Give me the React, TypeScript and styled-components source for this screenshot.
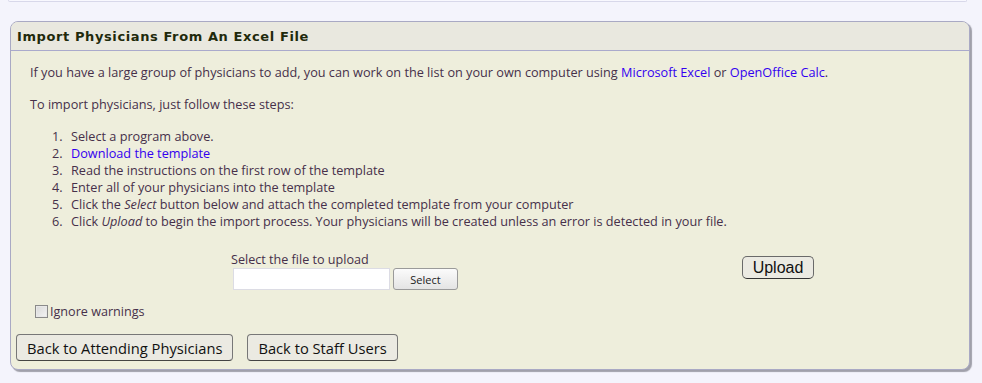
import styled, { createGlobalStyle } from "styled-components";

const GlobalStyle = createGlobalStyle`
  html, body {
    margin: 0;
    padding: 0;
    background: #f4f4fc;
  }
  body {
    font-family: "Open Sans", "Noto Sans", sans-serif;
  }
`;

function App() {
  const steps: React.ReactNode[] = [
    "Select a program above.",
    <Link key="dl">Download the template</Link>,
    "Read the instructions on the first row of the template",
    "Enter all of your physicians into the template",
    <>
      Click the <em>Select</em> button below and attach the completed template from your computer
    </>,
    <>
      Click <em>Upload</em> to begin the import process. Your physicians will be created unless an error is
      detected in your file.
    </>,
  ];

  return (
    <Page>
      <GlobalStyle />
      <PrevPanel />
      <Panel>
        <Header>
          <Title>Import Physicians From An Excel File</Title>
        </Header>
        <Body>
          <Text>
            If you have a large group of physicians to add, you can work on the list on your own computer using{" "}
            <Link>Microsoft Excel</Link> or <Link>OpenOffice Calc</Link>.
          </Text>
          <Text>To import physicians, just follow these steps:</Text>
          <Steps>
            {steps.map((s, i) => (
              <Step key={i}>
                <Num>{i + 1}.</Num>
                <span>{s}</span>
              </Step>
            ))}
          </Steps>

          <UploadRow>
            <FileGroup>
              <Label>Select the file to upload</Label>
              <FileLine>
                <FileBox />
                <SelectBtn>Select</SelectBtn>
              </FileLine>
            </FileGroup>
            <UploadBtn>Upload</UploadBtn>
          </UploadRow>

          <CheckRow>
            <Check />
            <span>Ignore warnings</span>
          </CheckRow>
        </Body>
        <Footer>
          <NavBtn>Back to Attending Physicians</NavBtn>
          <NavBtn>Back to Staff Users</NavBtn>
        </Footer>
      </Panel>
    </Page>
  );
}

const Page = styled.div`
  width: 982px;
  height: 383px;
  overflow: hidden;
`;

const PrevPanel = styled.div`
  height: 1px;
  margin: 0 15px 0 8px;
  background: #f8f8fe;
  border: 1px solid #d8d8ea;
  border-top: none;
  border-radius: 0 0 6px 6px;
  margin-bottom: 19px;
`;

const Panel = styled.div`
  margin: 0 12px 0 10px;
  border: 1px solid #a9a9c4;
  border-radius: 8px;
  background: #eeeedc;
  box-shadow: 2px 2px 1px #a0a0aa;
  overflow: hidden;
`;

const Header = styled.div`
  height: 28px;
  display: flex;
  align-items: center;
  padding: 0 6px;
  background: #e9e8df;
  border-bottom: 1px solid #aaaacc;
`;

const Title = styled.h2`
  margin: 0;
  font-family: "DejaVu Sans", Verdana, sans-serif;
  font-size: 13px;
  font-weight: bold;
  letter-spacing: 0.6px;
  color: #1f2a0c;
`;

const Body = styled.div`
  padding: 13px 19px 0;
  font-size: 12.7px;
  line-height: 17px;
  color: #46304a;
`;

const Text = styled.p`
  margin: 0 0 15px;
`;

const Link = styled.a`
  color: #3300f0;
  cursor: pointer;
`;

const Steps = styled.ol`
  margin: 12px 0 0;
  padding-left: 22px;
  list-style: none;
`;

const Step = styled.li`
  display: flex;
`;

const Num = styled.span`
  width: 19px;
  flex: none;
`;

const UploadRow = styled.div`
  display: flex;
  align-items: flex-start;
  margin-top: 22px;
  padding-left: 201px;
`;

const FileGroup = styled.div`
  display: flex;
  flex-direction: column;
`;

const Label = styled.div`
  font-size: 12.6px;
  line-height: 16px;
  color: #46304a;
`;

const FileLine = styled.div`
  display: flex;
  align-items: center;
  gap: 3px;
  padding-left: 2px;
`;

const FileBox = styled.div`
  width: 155px;
  height: 20px;
  background: #fff;
  border: 1px solid #dcdce4;
`;

const SelectBtn = styled.button`
  width: 65px;
  height: 22px;
  padding: 0;
  font-family: "Open Sans", sans-serif;
  font-size: 11px;
  color: #222;
  background: linear-gradient(#fbfbfb, #e4e4e4);
  border: 1px solid #9a9a9a;
  border-radius: 3px;
`;

const UploadBtn = styled.button`
  margin: 4px 0 0 284px;
  width: 72px;
  height: 23px;
  padding: 0;
  font-family: "Liberation Sans", Arial, sans-serif;
  font-size: 16px;
  color: #111;
  background: #ebeae2;
  border: 1px solid #6a6a6a;
  border-bottom-color: #333;
  border-radius: 5px;
`;

const CheckRow = styled.label`
  display: flex;
  align-items: center;
  margin-top: 13px;
  margin-left: 5px;
  font-size: 12.6px;
  gap: 2px;
`;

const Check = styled.span`
  display: inline-block;
  width: 11px;
  height: 11px;
  border: 1px solid #8a8a8a;
  background: linear-gradient(135deg, #d8d8d8, #f4f4f4);
  box-shadow: inset 0 0 0 1px #e8e8e8;
`;

const Footer = styled.div`
  display: flex;
  gap: 14px;
  padding: 14px 5px 8px;
`;

const NavBtn = styled.button`
  height: 27px;
  padding: 0 10px;
  font-family: "Open Sans", sans-serif;
  font-size: 14.7px;
  color: #111;
  background: #ebeae2;
  border: 1px solid #777;
  border-bottom-color: #444;
  border-radius: 4px;
`;

export default App;
